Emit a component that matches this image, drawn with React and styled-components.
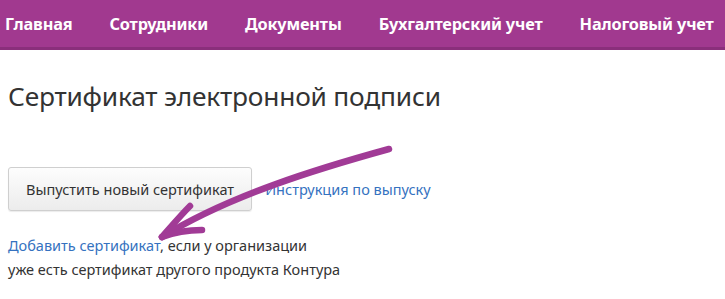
import styled, { createGlobalStyle } from "styled-components";

const Global = createGlobalStyle`
  body {
    margin: 0;
    background: #fff;
    font-family: "Segoe UI", "Noto Sans", "Open Sans", sans-serif;
    color: #333;
  }
`;

const TopBar = styled.header`
  height: 47px;
  background: #a1398f;
  border-bottom: 3px solid #8a2f7b;
  display: flex;
  align-items: center;
  padding-left: 5px;
  gap: 37px;
  overflow: hidden;
  white-space: nowrap;
`;

const NavItem = styled.a`
  color: #fff;
  font-weight: 700;
  font-size: 16.3px;
  text-decoration: none;
  letter-spacing: -0.15px;
`;

const Page = styled.main`
  position: relative;
  padding: 28px 8px 0;
`;

const Title = styled.h1`
  margin: 0;
  font-weight: 400;
  font-size: 26.3px;
  line-height: 36px;
  color: #333;
  letter-spacing: -0.2px;
`;

const Actions = styled.div`
  margin-top: 53px;
  display: flex;
  align-items: center;
  gap: 13px;
`;

const Button = styled.button`
  height: 44px;
  padding: 0 17px;
  border: 1px solid #cfcfcf;
  border-radius: 3px;
  background: linear-gradient(#fdfdfd, #ececec);
  box-shadow: 0 1px 1px rgba(0, 0, 0, 0.08);
  font-family: inherit;
  font-size: 14.5px;
  color: #333;
`;

const Link = styled.a`
  color: #3572c0;
  font-size: 14.5px;
  text-decoration: none;
`;

const Note = styled.p`
  margin: 22px 0 0;
  font-size: 14.5px;
  line-height: 24px;
  color: #333;
`;

const Arrow = styled.svg`
  position: absolute;
  left: 0;
  top: 0;
  pointer-events: none;
`;

export default function App() {
  return (
    <>
      <Global />
      <TopBar>
        <NavItem>Главная</NavItem>
        <NavItem>Сотрудники</NavItem>
        <NavItem>Документы</NavItem>
        <NavItem>Бухгалтерский учет</NavItem>
        <NavItem>Налоговый учет</NavItem>
      </TopBar>
      <Page>
        <Title>Сертификат электронной подписи</Title>
        <Actions>
          <Button>Выпустить новый сертификат</Button>
          <Link>Инструкция по выпуску</Link>
        </Actions>
        <Note>
          <Link as="span">Добавить сертификат</Link>, если у организации
          <br />
          уже есть сертификат другого продукта Контура
        </Note>
        <Arrow width="725" height="249" viewBox="0 50 725 249">
          <g fill="none" stroke="#a13b96" strokeWidth="6.5" strokeLinecap="round" strokeLinejoin="round">
            <path d="M389 149 C 320 168, 230 195, 162 237" />
            <path d="M190 206 C 180 216, 170 228, 162 237" />
            <path d="M162 237 C 175 232, 190 230, 202 230" />
          </g>
        </Arrow>
      </Page>
    </>
  );
}
